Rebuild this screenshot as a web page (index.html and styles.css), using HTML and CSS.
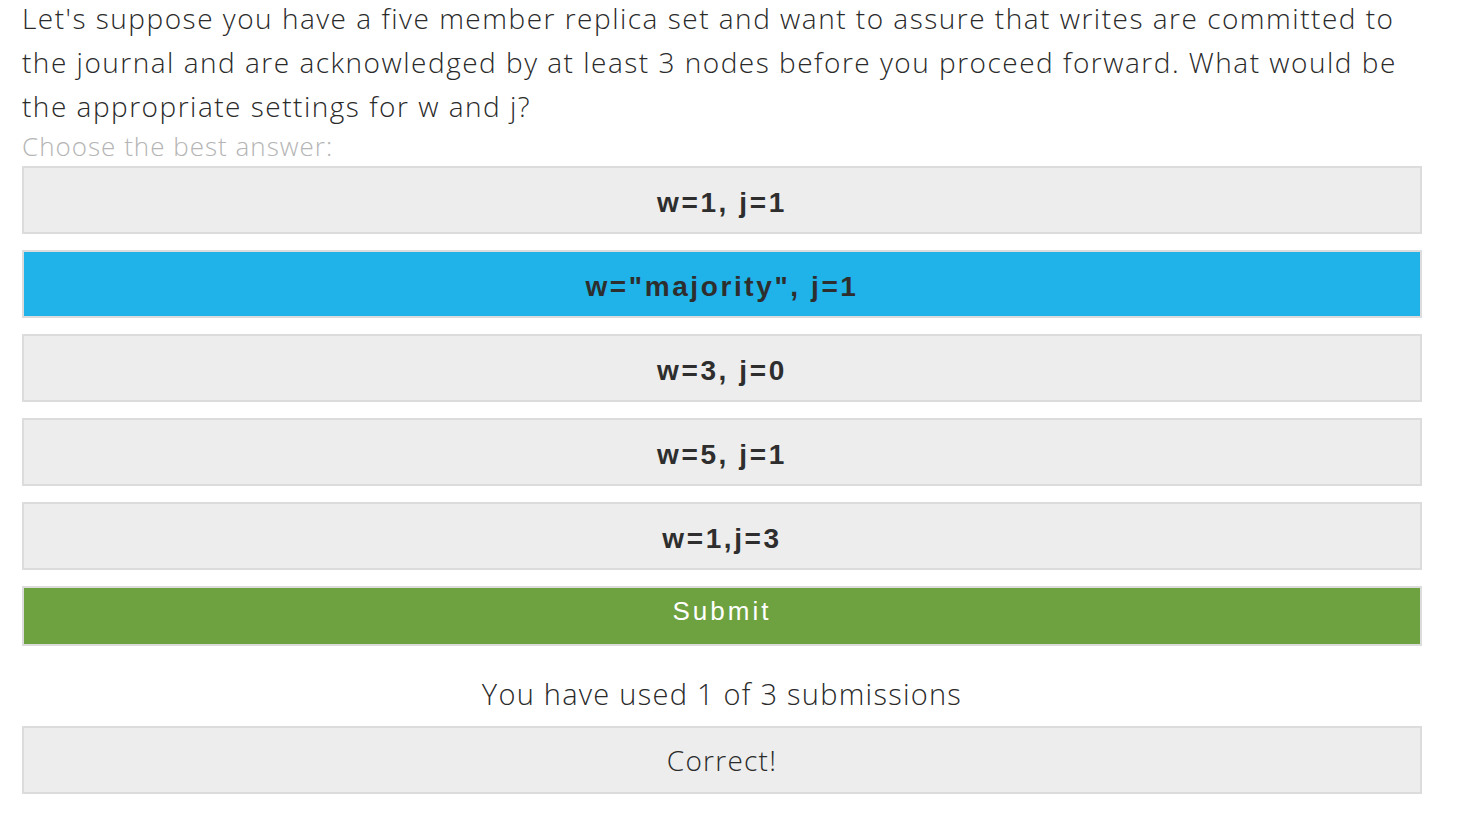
FILE: index.html
```html
<!DOCTYPE html>
<html lang="en">
<head>
<meta charset="utf-8">
<title>Quiz</title>
<link rel="stylesheet" href="styles.css">
</head>
<body>
<div class="problem">
  <p class="question">Let's suppose you have a five member replica set and want to assure that writes are committed to the journal and are acknowledged by at least 3 nodes before you proceed forward. What would be the appropriate settings for w and j?</p>
  <p class="hint">Choose the best answer:</p>
  <ul class="choices">
    <li class="choice">w=1, j=1</li>
    <li class="choice selected">w="majority", j=1</li>
    <li class="choice">w=3, j=0</li>
    <li class="choice">w=5, j=1</li>
    <li class="choice">w=1,j=3</li>
  </ul>
  <button class="submit" type="button">Submit</button>
  <p class="used">You have used 1 of 3 submissions</p>
  <div class="result">Correct!</div>
</div>
</body>
</html>
```
FILE: styles.css
```css
html, body {
  margin: 0;
  padding: 0;
  background: #fff;
}

.problem {
  width: 1400px;
  margin-left: 22px;
  font-family: "Open Sans", "Liberation Sans", sans-serif;
  color: #333;
}

.question {
  margin: -4px 0 0;
  font-size: 28px;
  font-weight: 300;
  line-height: 44px;
  letter-spacing: 1.5px;
  color: #2a2a2a;
}

.hint {
  margin: 6px 0 8px;
  font-size: 26px;
  font-weight: 300;
  line-height: 24px;
  letter-spacing: 1px;
  color: #b5b5b5;
}

.choices {
  list-style: none;
  margin: 0;
  padding: 0;
  display: flex;
  flex-direction: column;
  gap: 16px;
}

.choice {
  box-sizing: border-box;
  height: 68px;
  padding-top: 5px;
  line-height: 59px;
  border: 2px solid #dcdcdc;
  background: #ededed;
  text-align: center;
  font-family: "Liberation Sans", Arial, sans-serif;
  font-weight: 700;
  font-size: 28px;
  letter-spacing: 2.6px;
  color: #2e2e2e;
}

.choice.selected {
  background: #1fb3e9;
}

.submit {
  display: block;
  box-sizing: border-box;
  width: 100%;
  height: 60px;
  margin-top: 16px;
  padding: 0 0 10px;
  line-height: 46px;
  border: 2px solid #dcdcdc;
  background: #6ea240;
  color: #fff;
  font-family: "Liberation Sans", Arial, sans-serif;
  font-size: 26px;
  letter-spacing: 3px;
  text-align: center;
}

.used {
  margin: 0;
  padding-top: 16px;
  line-height: 64px;
  font-size: 29px;
  font-weight: 300;
  letter-spacing: 1.25px;
  text-align: center;
  color: #2a2a2a;
}

.result {
  box-sizing: border-box;
  height: 68px;
  line-height: 64px;
  border: 2px solid #dcdcdc;
  background: #ededed;
  text-align: center;
  font-size: 28px;
  font-weight: 300;
  letter-spacing: 1.25px;
  color: #2a2a2a;
}
```
